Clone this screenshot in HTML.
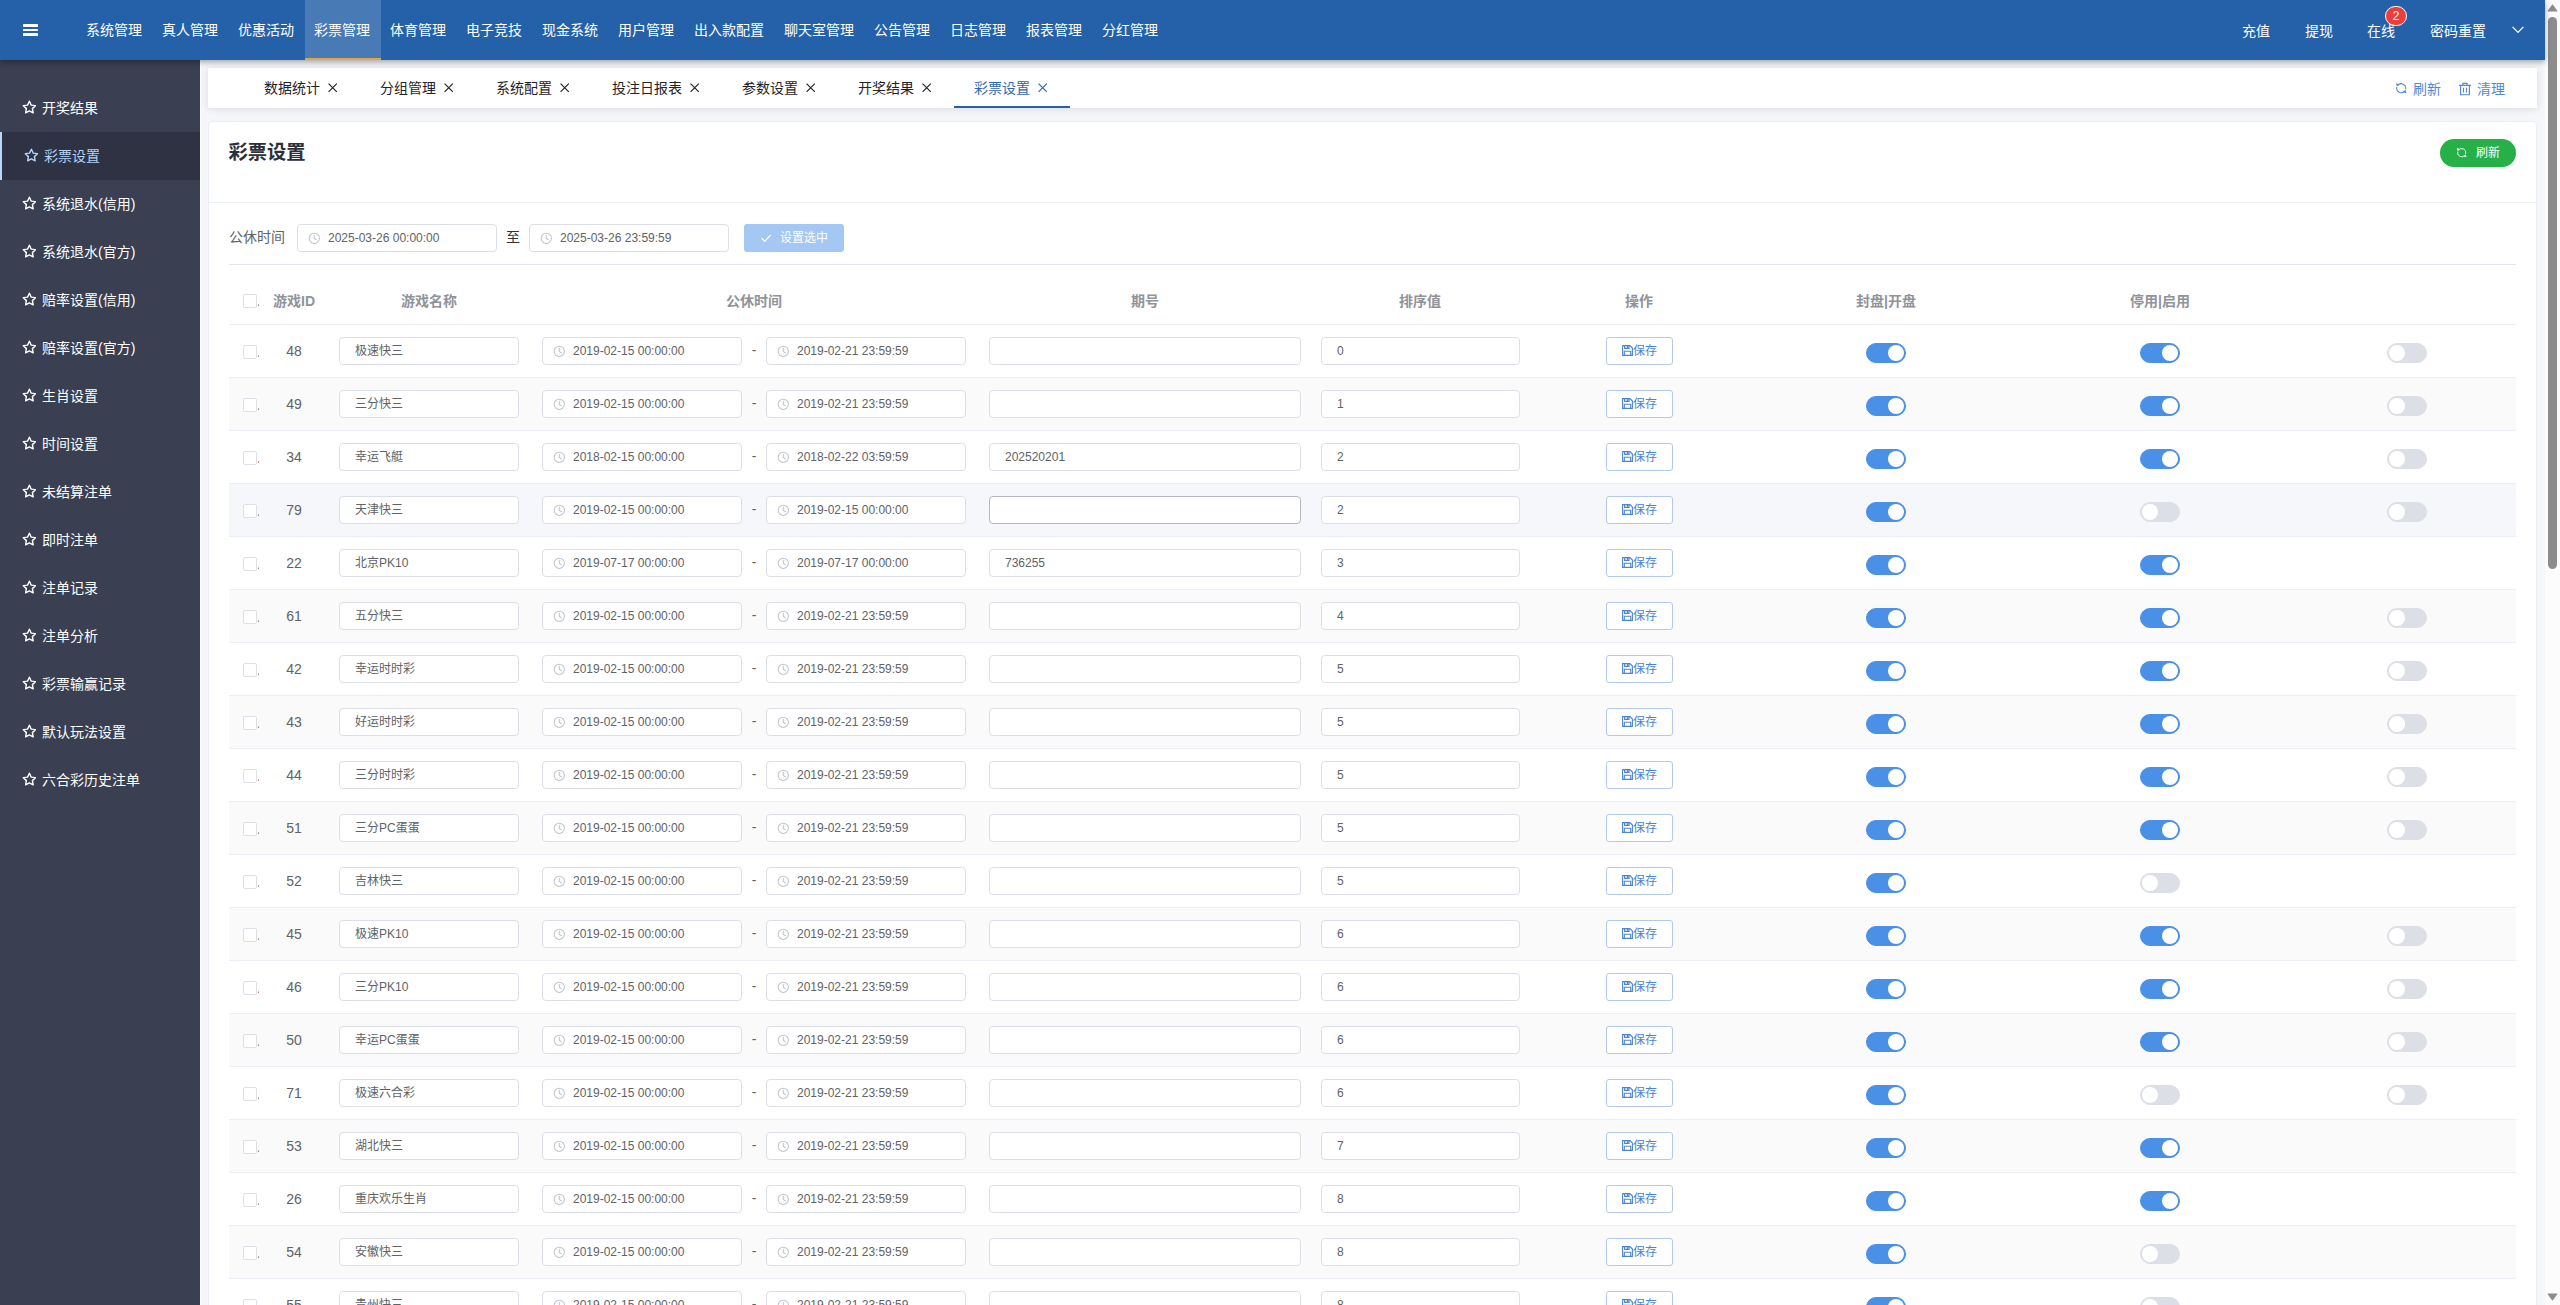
<!DOCTYPE html>
<html lang="zh-CN"><head><meta charset="utf-8"><title>彩票设置</title>
<style>
*{box-sizing:border-box;margin:0;padding:0}
html,body{width:2560px;height:1305px;overflow:hidden}
body{position:relative;background:#f5f6fa;font-family:"Liberation Sans","Noto Sans CJK SC",sans-serif;font-size:14px;color:#606266}
svg{display:block}
#hdr{position:absolute;left:0;top:0;width:2545px;height:60px;background:#2561a9;box-shadow:0 2px 6px rgba(0,0,0,.35);z-index:5;color:#fff}
#ham{position:absolute;left:23px;top:24px;width:15px;height:12px}
#ham i{position:absolute;left:0;width:15px;height:2.7px;background:#fff;border-radius:.5px}
#nav{position:absolute;left:76px;top:0;height:60px;display:flex}
#nav span{display:block;height:60px;line-height:60px;padding:0 10px;font-size:14px;white-space:nowrap}
#navon{position:absolute;left:305px;top:0;width:76px;height:60px;background:rgba(255,255,255,.16);border-bottom:2px solid #e0a644}
.hr{position:absolute;top:0;height:60px;line-height:62px;font-size:14px;white-space:nowrap}
#badge{position:absolute;left:2385px;top:6px;width:22px;height:20px;border-radius:10px;background:#ee3d3d;border:1px solid #fff;color:#fff;font-size:12px;line-height:18px;text-align:center}
#side{position:absolute;left:0;top:60px;width:200px;height:1245px;background:#3a3f51;padding-top:24px;color:#fff}
#side div{height:48px;line-height:48px;position:relative;padding-left:42px;font-size:14px;white-space:nowrap}
#side div.on{background:#2e3243;border-left:2px solid #b9d7fb;color:#b5d3f7}
#side .star{position:absolute;left:21.6px;top:16.4px;width:14.8px;height:14.2px}
#side div.on .star{left:22px}
#tabs{position:absolute;left:208px;top:68px;width:2329px;height:40px;background:#fff;box-shadow:0 1px 8px rgba(0,0,0,.11)}
#tabs .t{position:absolute;top:0;height:40px;line-height:40px;font-size:14px;color:#1f2329;white-space:nowrap}
#tabs .t.on{color:#2f66ad}
#tabs .cls{position:absolute;top:15.3px;width:9.4px;height:9.4px}
#tabs .bar{position:absolute;left:746px;top:38px;width:116px;height:2px;background:#2561a9}
#tabs .act{position:absolute;top:0;height:40px;line-height:42px;color:#5189d3;font-size:14px}
#card{position:absolute;left:208px;top:121px;width:2329px;height:1300px;background:#fff;border:1px solid #ebeef5;border-radius:4px}
#card h3{position:absolute;left:19.5px;top:18px;font-size:19.3px;line-height:26px;color:#2c3038;font-weight:bold}
#gbtn{position:absolute;left:2231px;top:17px;width:76px;height:28px;border-radius:14px;background:#25b148;color:#fff;font-size:12px;line-height:28px}
#hl{position:absolute;left:0;top:80px;width:2327px;height:1px;background:#ebeef5}
#flt{position:absolute;left:20px;top:102px;height:28px;line-height:28px;width:900px}
.inp{position:absolute;height:28px;border:1px solid #dcdfe6;border-radius:4px;background:#fff;font-size:12px;line-height:26px;color:#606266;white-space:nowrap;overflow:hidden}
.inp.d{padding-left:30px}
.inp.p{padding-left:15px}
.inp .clk{position:absolute;left:10.4px;top:7.4px;width:12.6px;height:12.6px}
#sbtn{position:absolute;left:515px;top:0;width:100px;height:28px;border-radius:3px;background:#a4c8f3;color:#fff;font-size:12px;line-height:28px}
#hl2{position:absolute;left:20px;top:142px;width:2287px;height:1px;background:#e4e7ed}
#tbl{position:absolute;left:20px;top:143px;width:2287px}
.th{position:absolute;top:0;height:60px;width:2287px;border-bottom:1px solid #ebeef5;font-weight:bold;color:#909399;font-size:14px;line-height:60px}
.th span{position:absolute;text-align:center;white-space:nowrap}
.r{position:absolute;left:0;width:2287px;height:53px;border-bottom:1px solid #ebeef5;background:#fff}
.r.s{background:#fafafa}
.r.h{background:#f5f7fa}
.cb{position:absolute;left:14px;width:14px;height:14px;border:1px solid #dcdfe6;border-radius:2px;background:#fff}
.dot{position:absolute;left:28px;font-size:14px;color:#606266;width:2.4px;overflow:hidden}
.id{position:absolute;left:30px;width:70px;top:0;height:52px;line-height:53px;text-align:center;font-size:14px;color:#606266}
.dash{position:absolute;left:513px;width:24px;top:0;height:52px;line-height:50px;text-align:center;font-size:14px;color:#606266}
.sbt{position:absolute;left:1377px;top:12px;width:67px;height:28px;border:1px solid #b4c9e8;border-radius:3px;background:#fff;color:#4a84d2;font-size:12px;line-height:26px}
.sbt .sv{position:absolute;left:15px;top:7px;width:11px;height:11px}
.sbt b{position:absolute;left:26px;top:0;font-weight:normal}
.sw{position:absolute;top:18px;width:40px;height:20px;border-radius:10px;background:#4a90e6;border:1px solid #4a90e6}
.sw i{position:absolute;top:1px;left:21px;width:16px;height:16px;border-radius:8px;background:#fff}
.sw.off{background:#dcdfe6;border-color:#dcdfe6}
.sw.off i{left:1px}
.rf{position:absolute;left:-1px;top:14.3px;width:12.4px;height:12.4px}
.tr{position:absolute;left:-1px;top:13.7px;width:14px;height:14px}
.rf2{position:absolute;left:16.3px;top:8.4px;width:11.4px;height:11.4px}
.ck{position:absolute;left:16px;top:8px;width:12px;height:12px}
#sb{position:absolute;left:2545px;top:0;width:15px;height:1305px;background:#fcfcfd}
#sb .th2{position:absolute;left:3px;top:17px;width:9px;height:552px;border-radius:4.5px;background:#8c8c8c}
#sb .up{position:absolute;left:2px;top:4px;width:11px;height:8px}
#sb .dn{position:absolute;left:2px;top:1293px;width:11px;height:8px}
</style></head><body>
<div id="hdr"><div id="ham"><i style="top:0"></i><i style="top:4.65px"></i><i style="top:9.3px"></i></div><div id="navon"></div><div id="nav"><span>系统管理</span><span>真人管理</span><span>优惠活动</span><span class="on">彩票管理</span><span>体育管理</span><span>电子竞技</span><span>现金系统</span><span>用户管理</span><span>出入款配置</span><span>聊天室管理</span><span>公告管理</span><span>日志管理</span><span>报表管理</span><span>分红管理</span></div><div class="hr" style="left:2242px">充值</div><div class="hr" style="left:2305px">提现</div><div class="hr" style="left:2367px">在线</div><div class="hr" style="left:2430px">密码重置</div><div id="badge">2</div><svg style="position:absolute;left:2512px;top:26px;width:12px;height:8px" viewBox="0 0 12 8"><path d="M0.6 0.9 L6 6.4 L11.4 0.9" fill="none" stroke="#fff" stroke-width="1.3"/></svg></div>
<div id="side"><div><svg class="star" viewBox="0 0 14 13.4"><path d="M7 1.15 L8.75 4.8 L12.75 5.35 L9.85 8.15 L10.55 12.15 L7 10.25 L3.45 12.15 L4.15 8.15 L1.25 5.35 L5.25 4.8 Z" fill="none" stroke="currentColor" stroke-width="1.35" stroke-linejoin="round"/></svg>开奖结果</div><div class="on"><svg class="star" viewBox="0 0 14 13.4"><path d="M7 1.15 L8.75 4.8 L12.75 5.35 L9.85 8.15 L10.55 12.15 L7 10.25 L3.45 12.15 L4.15 8.15 L1.25 5.35 L5.25 4.8 Z" fill="none" stroke="currentColor" stroke-width="1.35" stroke-linejoin="round"/></svg>彩票设置</div><div><svg class="star" viewBox="0 0 14 13.4"><path d="M7 1.15 L8.75 4.8 L12.75 5.35 L9.85 8.15 L10.55 12.15 L7 10.25 L3.45 12.15 L4.15 8.15 L1.25 5.35 L5.25 4.8 Z" fill="none" stroke="currentColor" stroke-width="1.35" stroke-linejoin="round"/></svg>系统退水(信用)</div><div><svg class="star" viewBox="0 0 14 13.4"><path d="M7 1.15 L8.75 4.8 L12.75 5.35 L9.85 8.15 L10.55 12.15 L7 10.25 L3.45 12.15 L4.15 8.15 L1.25 5.35 L5.25 4.8 Z" fill="none" stroke="currentColor" stroke-width="1.35" stroke-linejoin="round"/></svg>系统退水(官方)</div><div><svg class="star" viewBox="0 0 14 13.4"><path d="M7 1.15 L8.75 4.8 L12.75 5.35 L9.85 8.15 L10.55 12.15 L7 10.25 L3.45 12.15 L4.15 8.15 L1.25 5.35 L5.25 4.8 Z" fill="none" stroke="currentColor" stroke-width="1.35" stroke-linejoin="round"/></svg>赔率设置(信用)</div><div><svg class="star" viewBox="0 0 14 13.4"><path d="M7 1.15 L8.75 4.8 L12.75 5.35 L9.85 8.15 L10.55 12.15 L7 10.25 L3.45 12.15 L4.15 8.15 L1.25 5.35 L5.25 4.8 Z" fill="none" stroke="currentColor" stroke-width="1.35" stroke-linejoin="round"/></svg>赔率设置(官方)</div><div><svg class="star" viewBox="0 0 14 13.4"><path d="M7 1.15 L8.75 4.8 L12.75 5.35 L9.85 8.15 L10.55 12.15 L7 10.25 L3.45 12.15 L4.15 8.15 L1.25 5.35 L5.25 4.8 Z" fill="none" stroke="currentColor" stroke-width="1.35" stroke-linejoin="round"/></svg>生肖设置</div><div><svg class="star" viewBox="0 0 14 13.4"><path d="M7 1.15 L8.75 4.8 L12.75 5.35 L9.85 8.15 L10.55 12.15 L7 10.25 L3.45 12.15 L4.15 8.15 L1.25 5.35 L5.25 4.8 Z" fill="none" stroke="currentColor" stroke-width="1.35" stroke-linejoin="round"/></svg>时间设置</div><div><svg class="star" viewBox="0 0 14 13.4"><path d="M7 1.15 L8.75 4.8 L12.75 5.35 L9.85 8.15 L10.55 12.15 L7 10.25 L3.45 12.15 L4.15 8.15 L1.25 5.35 L5.25 4.8 Z" fill="none" stroke="currentColor" stroke-width="1.35" stroke-linejoin="round"/></svg>未结算注单</div><div><svg class="star" viewBox="0 0 14 13.4"><path d="M7 1.15 L8.75 4.8 L12.75 5.35 L9.85 8.15 L10.55 12.15 L7 10.25 L3.45 12.15 L4.15 8.15 L1.25 5.35 L5.25 4.8 Z" fill="none" stroke="currentColor" stroke-width="1.35" stroke-linejoin="round"/></svg>即时注单</div><div><svg class="star" viewBox="0 0 14 13.4"><path d="M7 1.15 L8.75 4.8 L12.75 5.35 L9.85 8.15 L10.55 12.15 L7 10.25 L3.45 12.15 L4.15 8.15 L1.25 5.35 L5.25 4.8 Z" fill="none" stroke="currentColor" stroke-width="1.35" stroke-linejoin="round"/></svg>注单记录</div><div><svg class="star" viewBox="0 0 14 13.4"><path d="M7 1.15 L8.75 4.8 L12.75 5.35 L9.85 8.15 L10.55 12.15 L7 10.25 L3.45 12.15 L4.15 8.15 L1.25 5.35 L5.25 4.8 Z" fill="none" stroke="currentColor" stroke-width="1.35" stroke-linejoin="round"/></svg>注单分析</div><div><svg class="star" viewBox="0 0 14 13.4"><path d="M7 1.15 L8.75 4.8 L12.75 5.35 L9.85 8.15 L10.55 12.15 L7 10.25 L3.45 12.15 L4.15 8.15 L1.25 5.35 L5.25 4.8 Z" fill="none" stroke="currentColor" stroke-width="1.35" stroke-linejoin="round"/></svg>彩票输赢记录</div><div><svg class="star" viewBox="0 0 14 13.4"><path d="M7 1.15 L8.75 4.8 L12.75 5.35 L9.85 8.15 L10.55 12.15 L7 10.25 L3.45 12.15 L4.15 8.15 L1.25 5.35 L5.25 4.8 Z" fill="none" stroke="currentColor" stroke-width="1.35" stroke-linejoin="round"/></svg>默认玩法设置</div><div><svg class="star" viewBox="0 0 14 13.4"><path d="M7 1.15 L8.75 4.8 L12.75 5.35 L9.85 8.15 L10.55 12.15 L7 10.25 L3.45 12.15 L4.15 8.15 L1.25 5.35 L5.25 4.8 Z" fill="none" stroke="currentColor" stroke-width="1.35" stroke-linejoin="round"/></svg>六合彩历史注单</div></div>
<div id="tabs"><span class="t" style="left:56px">数据统计</span><span style="color:#1f2329"><svg class="cls" style="left:120px" viewBox="0 0 10 10"><path d="M0.6 0.6 L9.4 9.4 M9.4 0.6 L0.6 9.4" stroke="currentColor" stroke-width="1.25" fill="none"/></svg></span><span class="t" style="left:172px">分组管理</span><span style="color:#1f2329"><svg class="cls" style="left:236px" viewBox="0 0 10 10"><path d="M0.6 0.6 L9.4 9.4 M9.4 0.6 L0.6 9.4" stroke="currentColor" stroke-width="1.25" fill="none"/></svg></span><span class="t" style="left:288px">系统配置</span><span style="color:#1f2329"><svg class="cls" style="left:352px" viewBox="0 0 10 10"><path d="M0.6 0.6 L9.4 9.4 M9.4 0.6 L0.6 9.4" stroke="currentColor" stroke-width="1.25" fill="none"/></svg></span><span class="t" style="left:404px">投注日报表</span><span style="color:#1f2329"><svg class="cls" style="left:482px" viewBox="0 0 10 10"><path d="M0.6 0.6 L9.4 9.4 M9.4 0.6 L0.6 9.4" stroke="currentColor" stroke-width="1.25" fill="none"/></svg></span><span class="t" style="left:534px">参数设置</span><span style="color:#1f2329"><svg class="cls" style="left:598px" viewBox="0 0 10 10"><path d="M0.6 0.6 L9.4 9.4 M9.4 0.6 L0.6 9.4" stroke="currentColor" stroke-width="1.25" fill="none"/></svg></span><span class="t" style="left:650px">开奖结果</span><span style="color:#1f2329"><svg class="cls" style="left:714px" viewBox="0 0 10 10"><path d="M0.6 0.6 L9.4 9.4 M9.4 0.6 L0.6 9.4" stroke="currentColor" stroke-width="1.25" fill="none"/></svg></span><span class="t on" style="left:766px">彩票设置</span><span style="color:#2f66ad"><svg class="cls" style="left:830px" viewBox="0 0 10 10"><path d="M0.6 0.6 L9.4 9.4 M9.4 0.6 L0.6 9.4" stroke="currentColor" stroke-width="1.25" fill="none"/></svg></span><div class="bar"></div><div class="act" style="left:2188px"><svg class="rf" viewBox="0 0 12 12"><path d="M2.6 3.4 A4.3 4.3 0 0 1 10.2 7.1 M9.4 8.6 A4.3 4.3 0 0 1 1.8 4.9" fill="none" stroke="currentColor" stroke-width="1"/><path d="M0.9 1.1 L4.1 2.1 L1.9 4.4 Z M11.1 10.9 L7.9 9.9 L10.1 7.6 Z" fill="currentColor"/></svg><span style="position:absolute;left:17px;top:0;white-space:nowrap">刷新</span></div><div class="act" style="left:2251px"><svg class="tr" viewBox="0 0 12 12"><path d="M0.8 2.9 H11.2 M4.2 2.7 V1.2 H7.8 V2.7 M2.2 3 V10.9 H9.8 V3 M4.7 5 V9 M7.3 5 V9" fill="none" stroke="currentColor" stroke-width="1"/></svg><span style="position:absolute;left:18px;top:0;white-space:nowrap">清理</span></div></div>
<div id="card"><h3>彩票设置</h3><div id="gbtn"><svg class="rf2" viewBox="0 0 12 12"><path d="M2.6 3.4 A4.3 4.3 0 0 1 10.2 7.1 M9.4 8.6 A4.3 4.3 0 0 1 1.8 4.9" fill="none" stroke="currentColor" stroke-width="1"/><path d="M0.9 1.1 L4.1 2.1 L1.9 4.4 Z M11.1 10.9 L7.9 9.9 L10.1 7.6 Z" fill="currentColor"/></svg><span style="position:absolute;left:36px;top:0;white-space:nowrap">刷新</span></div><div id="hl"></div><div id="flt"><span style="position:absolute;left:0;top:-1px;color:#606266">公休时间</span><div class="inp d" style="left:68px;top:0;width:200px"><svg class="clk" viewBox="0 0 12 12"><circle cx="6" cy="6" r="4.9" fill="none" stroke="#c0c4cc" stroke-width="1"/><path d="M6 3.1 V6.2 L8 7.4" fill="none" stroke="#c0c4cc" stroke-width="1" stroke-linecap="round"/></svg>2025-03-26 00:00:00</div><span style="position:absolute;left:277px;top:-1px;color:#303133">至</span><div class="inp d" style="left:300px;top:0;width:200px"><svg class="clk" viewBox="0 0 12 12"><circle cx="6" cy="6" r="4.9" fill="none" stroke="#c0c4cc" stroke-width="1"/><path d="M6 3.1 V6.2 L8 7.4" fill="none" stroke="#c0c4cc" stroke-width="1" stroke-linecap="round"/></svg>2025-03-26 23:59:59</div><div id="sbtn"><svg class="ck" viewBox="0 0 12 12"><path d="M1.6 6.3 L4.7 9.3 L10.6 3" fill="none" stroke="#fff" stroke-width="1.2"/></svg><span style="position:absolute;left:36px;top:0;white-space:nowrap">设置选中</span></div></div><div id="hl2"></div><div id="tbl"><div class="th"><div class="cb" style="top:29px"></div><span class="dot" style="top:6px;font-weight:normal">.</span><span style="left:-35px;width:200px;top:6px">游戏ID</span><span style="left:100px;width:200px;top:6px">游戏名称</span><span style="left:425px;width:200px;top:6px">公休时间</span><span style="left:816px;width:200px;top:6px">期号</span><span style="left:1091px;width:200px;top:6px">排序值</span><span style="left:1310px;width:200px;top:6px">操作</span><span style="left:1557px;width:200px;top:6px">封盘|开盘</span><span style="left:1831px;width:200px;top:6px">停用|启用</span></div>
<div class="r" style="top:60px"><div class="cb" style="top:20px"></div><span class="dot" style="top:19px">.</span><div class="id">48</div><div class="inp p" style="left:110px;top:12px;width:180px">极速快三</div><div class="inp d" style="left:313px;top:12px;width:200px"><svg class="clk" viewBox="0 0 12 12"><circle cx="6" cy="6" r="4.9" fill="none" stroke="#c0c4cc" stroke-width="1"/><path d="M6 3.1 V6.2 L8 7.4" fill="none" stroke="#c0c4cc" stroke-width="1" stroke-linecap="round"/></svg>2019-02-15 00:00:00</div><div class="dash">-</div><div class="inp d" style="left:537px;top:12px;width:200px"><svg class="clk" viewBox="0 0 12 12"><circle cx="6" cy="6" r="4.9" fill="none" stroke="#c0c4cc" stroke-width="1"/><path d="M6 3.1 V6.2 L8 7.4" fill="none" stroke="#c0c4cc" stroke-width="1" stroke-linecap="round"/></svg>2019-02-21 23:59:59</div><div class="inp p" style="left:760px;top:12px;width:312px"></div><div class="inp p" style="left:1092px;top:12px;width:199px">0</div><div class="sbt"><svg class="sv" viewBox="0 0 11 11"><path d="M0.6 0.6 H8 L10.4 3 V10.4 H0.6 Z M2.3 10.4 V6.3 H8.7 V10.4 M2.6 0.6 V3.4 H7 V0.6" fill="none" stroke="currentColor" stroke-width="1.1"/><rect x="4.9" y="0.9" width="1.3" height="2" fill="currentColor"/></svg><b>保存</b></div><div class="sw" style="left:1637px"><i></i></div><div class="sw" style="left:1911px"><i></i></div><div class="sw off" style="left:2158px"><i></i></div></div>
<div class="r s" style="top:113px"><div class="cb" style="top:20px"></div><span class="dot" style="top:19px">.</span><div class="id">49</div><div class="inp p" style="left:110px;top:12px;width:180px">三分快三</div><div class="inp d" style="left:313px;top:12px;width:200px"><svg class="clk" viewBox="0 0 12 12"><circle cx="6" cy="6" r="4.9" fill="none" stroke="#c0c4cc" stroke-width="1"/><path d="M6 3.1 V6.2 L8 7.4" fill="none" stroke="#c0c4cc" stroke-width="1" stroke-linecap="round"/></svg>2019-02-15 00:00:00</div><div class="dash">-</div><div class="inp d" style="left:537px;top:12px;width:200px"><svg class="clk" viewBox="0 0 12 12"><circle cx="6" cy="6" r="4.9" fill="none" stroke="#c0c4cc" stroke-width="1"/><path d="M6 3.1 V6.2 L8 7.4" fill="none" stroke="#c0c4cc" stroke-width="1" stroke-linecap="round"/></svg>2019-02-21 23:59:59</div><div class="inp p" style="left:760px;top:12px;width:312px"></div><div class="inp p" style="left:1092px;top:12px;width:199px">1</div><div class="sbt"><svg class="sv" viewBox="0 0 11 11"><path d="M0.6 0.6 H8 L10.4 3 V10.4 H0.6 Z M2.3 10.4 V6.3 H8.7 V10.4 M2.6 0.6 V3.4 H7 V0.6" fill="none" stroke="currentColor" stroke-width="1.1"/><rect x="4.9" y="0.9" width="1.3" height="2" fill="currentColor"/></svg><b>保存</b></div><div class="sw" style="left:1637px"><i></i></div><div class="sw" style="left:1911px"><i></i></div><div class="sw off" style="left:2158px"><i></i></div></div>
<div class="r" style="top:166px"><div class="cb" style="top:20px"></div><span class="dot" style="top:19px">.</span><div class="id">34</div><div class="inp p" style="left:110px;top:12px;width:180px">幸运飞艇</div><div class="inp d" style="left:313px;top:12px;width:200px"><svg class="clk" viewBox="0 0 12 12"><circle cx="6" cy="6" r="4.9" fill="none" stroke="#c0c4cc" stroke-width="1"/><path d="M6 3.1 V6.2 L8 7.4" fill="none" stroke="#c0c4cc" stroke-width="1" stroke-linecap="round"/></svg>2018-02-15 00:00:00</div><div class="dash">-</div><div class="inp d" style="left:537px;top:12px;width:200px"><svg class="clk" viewBox="0 0 12 12"><circle cx="6" cy="6" r="4.9" fill="none" stroke="#c0c4cc" stroke-width="1"/><path d="M6 3.1 V6.2 L8 7.4" fill="none" stroke="#c0c4cc" stroke-width="1" stroke-linecap="round"/></svg>2018-02-22 03:59:59</div><div class="inp p" style="left:760px;top:12px;width:312px">202520201</div><div class="inp p" style="left:1092px;top:12px;width:199px">2</div><div class="sbt"><svg class="sv" viewBox="0 0 11 11"><path d="M0.6 0.6 H8 L10.4 3 V10.4 H0.6 Z M2.3 10.4 V6.3 H8.7 V10.4 M2.6 0.6 V3.4 H7 V0.6" fill="none" stroke="currentColor" stroke-width="1.1"/><rect x="4.9" y="0.9" width="1.3" height="2" fill="currentColor"/></svg><b>保存</b></div><div class="sw" style="left:1637px"><i></i></div><div class="sw" style="left:1911px"><i></i></div><div class="sw off" style="left:2158px"><i></i></div></div>
<div class="r h" style="top:219px"><div class="cb" style="top:20px"></div><span class="dot" style="top:19px">.</span><div class="id">79</div><div class="inp p" style="left:110px;top:12px;width:180px">天津快三</div><div class="inp d" style="left:313px;top:12px;width:200px"><svg class="clk" viewBox="0 0 12 12"><circle cx="6" cy="6" r="4.9" fill="none" stroke="#c0c4cc" stroke-width="1"/><path d="M6 3.1 V6.2 L8 7.4" fill="none" stroke="#c0c4cc" stroke-width="1" stroke-linecap="round"/></svg>2019-02-15 00:00:00</div><div class="dash">-</div><div class="inp d" style="left:537px;top:12px;width:200px"><svg class="clk" viewBox="0 0 12 12"><circle cx="6" cy="6" r="4.9" fill="none" stroke="#c0c4cc" stroke-width="1"/><path d="M6 3.1 V6.2 L8 7.4" fill="none" stroke="#c0c4cc" stroke-width="1" stroke-linecap="round"/></svg>2019-02-15 00:00:00</div><div class="inp p" style="left:760px;top:12px;width:312px;border-color:#b4b8c0"></div><div class="inp p" style="left:1092px;top:12px;width:199px">2</div><div class="sbt"><svg class="sv" viewBox="0 0 11 11"><path d="M0.6 0.6 H8 L10.4 3 V10.4 H0.6 Z M2.3 10.4 V6.3 H8.7 V10.4 M2.6 0.6 V3.4 H7 V0.6" fill="none" stroke="currentColor" stroke-width="1.1"/><rect x="4.9" y="0.9" width="1.3" height="2" fill="currentColor"/></svg><b>保存</b></div><div class="sw" style="left:1637px"><i></i></div><div class="sw off" style="left:1911px"><i></i></div><div class="sw off" style="left:2158px"><i></i></div></div>
<div class="r" style="top:272px"><div class="cb" style="top:20px"></div><span class="dot" style="top:19px">.</span><div class="id">22</div><div class="inp p" style="left:110px;top:12px;width:180px">北京PK10</div><div class="inp d" style="left:313px;top:12px;width:200px"><svg class="clk" viewBox="0 0 12 12"><circle cx="6" cy="6" r="4.9" fill="none" stroke="#c0c4cc" stroke-width="1"/><path d="M6 3.1 V6.2 L8 7.4" fill="none" stroke="#c0c4cc" stroke-width="1" stroke-linecap="round"/></svg>2019-07-17 00:00:00</div><div class="dash">-</div><div class="inp d" style="left:537px;top:12px;width:200px"><svg class="clk" viewBox="0 0 12 12"><circle cx="6" cy="6" r="4.9" fill="none" stroke="#c0c4cc" stroke-width="1"/><path d="M6 3.1 V6.2 L8 7.4" fill="none" stroke="#c0c4cc" stroke-width="1" stroke-linecap="round"/></svg>2019-07-17 00:00:00</div><div class="inp p" style="left:760px;top:12px;width:312px">736255</div><div class="inp p" style="left:1092px;top:12px;width:199px">3</div><div class="sbt"><svg class="sv" viewBox="0 0 11 11"><path d="M0.6 0.6 H8 L10.4 3 V10.4 H0.6 Z M2.3 10.4 V6.3 H8.7 V10.4 M2.6 0.6 V3.4 H7 V0.6" fill="none" stroke="currentColor" stroke-width="1.1"/><rect x="4.9" y="0.9" width="1.3" height="2" fill="currentColor"/></svg><b>保存</b></div><div class="sw" style="left:1637px"><i></i></div><div class="sw" style="left:1911px"><i></i></div></div>
<div class="r s" style="top:325px"><div class="cb" style="top:20px"></div><span class="dot" style="top:19px">.</span><div class="id">61</div><div class="inp p" style="left:110px;top:12px;width:180px">五分快三</div><div class="inp d" style="left:313px;top:12px;width:200px"><svg class="clk" viewBox="0 0 12 12"><circle cx="6" cy="6" r="4.9" fill="none" stroke="#c0c4cc" stroke-width="1"/><path d="M6 3.1 V6.2 L8 7.4" fill="none" stroke="#c0c4cc" stroke-width="1" stroke-linecap="round"/></svg>2019-02-15 00:00:00</div><div class="dash">-</div><div class="inp d" style="left:537px;top:12px;width:200px"><svg class="clk" viewBox="0 0 12 12"><circle cx="6" cy="6" r="4.9" fill="none" stroke="#c0c4cc" stroke-width="1"/><path d="M6 3.1 V6.2 L8 7.4" fill="none" stroke="#c0c4cc" stroke-width="1" stroke-linecap="round"/></svg>2019-02-21 23:59:59</div><div class="inp p" style="left:760px;top:12px;width:312px"></div><div class="inp p" style="left:1092px;top:12px;width:199px">4</div><div class="sbt"><svg class="sv" viewBox="0 0 11 11"><path d="M0.6 0.6 H8 L10.4 3 V10.4 H0.6 Z M2.3 10.4 V6.3 H8.7 V10.4 M2.6 0.6 V3.4 H7 V0.6" fill="none" stroke="currentColor" stroke-width="1.1"/><rect x="4.9" y="0.9" width="1.3" height="2" fill="currentColor"/></svg><b>保存</b></div><div class="sw" style="left:1637px"><i></i></div><div class="sw" style="left:1911px"><i></i></div><div class="sw off" style="left:2158px"><i></i></div></div>
<div class="r" style="top:378px"><div class="cb" style="top:20px"></div><span class="dot" style="top:19px">.</span><div class="id">42</div><div class="inp p" style="left:110px;top:12px;width:180px">幸运时时彩</div><div class="inp d" style="left:313px;top:12px;width:200px"><svg class="clk" viewBox="0 0 12 12"><circle cx="6" cy="6" r="4.9" fill="none" stroke="#c0c4cc" stroke-width="1"/><path d="M6 3.1 V6.2 L8 7.4" fill="none" stroke="#c0c4cc" stroke-width="1" stroke-linecap="round"/></svg>2019-02-15 00:00:00</div><div class="dash">-</div><div class="inp d" style="left:537px;top:12px;width:200px"><svg class="clk" viewBox="0 0 12 12"><circle cx="6" cy="6" r="4.9" fill="none" stroke="#c0c4cc" stroke-width="1"/><path d="M6 3.1 V6.2 L8 7.4" fill="none" stroke="#c0c4cc" stroke-width="1" stroke-linecap="round"/></svg>2019-02-21 23:59:59</div><div class="inp p" style="left:760px;top:12px;width:312px"></div><div class="inp p" style="left:1092px;top:12px;width:199px">5</div><div class="sbt"><svg class="sv" viewBox="0 0 11 11"><path d="M0.6 0.6 H8 L10.4 3 V10.4 H0.6 Z M2.3 10.4 V6.3 H8.7 V10.4 M2.6 0.6 V3.4 H7 V0.6" fill="none" stroke="currentColor" stroke-width="1.1"/><rect x="4.9" y="0.9" width="1.3" height="2" fill="currentColor"/></svg><b>保存</b></div><div class="sw" style="left:1637px"><i></i></div><div class="sw" style="left:1911px"><i></i></div><div class="sw off" style="left:2158px"><i></i></div></div>
<div class="r s" style="top:431px"><div class="cb" style="top:20px"></div><span class="dot" style="top:19px">.</span><div class="id">43</div><div class="inp p" style="left:110px;top:12px;width:180px">好运时时彩</div><div class="inp d" style="left:313px;top:12px;width:200px"><svg class="clk" viewBox="0 0 12 12"><circle cx="6" cy="6" r="4.9" fill="none" stroke="#c0c4cc" stroke-width="1"/><path d="M6 3.1 V6.2 L8 7.4" fill="none" stroke="#c0c4cc" stroke-width="1" stroke-linecap="round"/></svg>2019-02-15 00:00:00</div><div class="dash">-</div><div class="inp d" style="left:537px;top:12px;width:200px"><svg class="clk" viewBox="0 0 12 12"><circle cx="6" cy="6" r="4.9" fill="none" stroke="#c0c4cc" stroke-width="1"/><path d="M6 3.1 V6.2 L8 7.4" fill="none" stroke="#c0c4cc" stroke-width="1" stroke-linecap="round"/></svg>2019-02-21 23:59:59</div><div class="inp p" style="left:760px;top:12px;width:312px"></div><div class="inp p" style="left:1092px;top:12px;width:199px">5</div><div class="sbt"><svg class="sv" viewBox="0 0 11 11"><path d="M0.6 0.6 H8 L10.4 3 V10.4 H0.6 Z M2.3 10.4 V6.3 H8.7 V10.4 M2.6 0.6 V3.4 H7 V0.6" fill="none" stroke="currentColor" stroke-width="1.1"/><rect x="4.9" y="0.9" width="1.3" height="2" fill="currentColor"/></svg><b>保存</b></div><div class="sw" style="left:1637px"><i></i></div><div class="sw" style="left:1911px"><i></i></div><div class="sw off" style="left:2158px"><i></i></div></div>
<div class="r" style="top:484px"><div class="cb" style="top:20px"></div><span class="dot" style="top:19px">.</span><div class="id">44</div><div class="inp p" style="left:110px;top:12px;width:180px">三分时时彩</div><div class="inp d" style="left:313px;top:12px;width:200px"><svg class="clk" viewBox="0 0 12 12"><circle cx="6" cy="6" r="4.9" fill="none" stroke="#c0c4cc" stroke-width="1"/><path d="M6 3.1 V6.2 L8 7.4" fill="none" stroke="#c0c4cc" stroke-width="1" stroke-linecap="round"/></svg>2019-02-15 00:00:00</div><div class="dash">-</div><div class="inp d" style="left:537px;top:12px;width:200px"><svg class="clk" viewBox="0 0 12 12"><circle cx="6" cy="6" r="4.9" fill="none" stroke="#c0c4cc" stroke-width="1"/><path d="M6 3.1 V6.2 L8 7.4" fill="none" stroke="#c0c4cc" stroke-width="1" stroke-linecap="round"/></svg>2019-02-21 23:59:59</div><div class="inp p" style="left:760px;top:12px;width:312px"></div><div class="inp p" style="left:1092px;top:12px;width:199px">5</div><div class="sbt"><svg class="sv" viewBox="0 0 11 11"><path d="M0.6 0.6 H8 L10.4 3 V10.4 H0.6 Z M2.3 10.4 V6.3 H8.7 V10.4 M2.6 0.6 V3.4 H7 V0.6" fill="none" stroke="currentColor" stroke-width="1.1"/><rect x="4.9" y="0.9" width="1.3" height="2" fill="currentColor"/></svg><b>保存</b></div><div class="sw" style="left:1637px"><i></i></div><div class="sw" style="left:1911px"><i></i></div><div class="sw off" style="left:2158px"><i></i></div></div>
<div class="r s" style="top:537px"><div class="cb" style="top:20px"></div><span class="dot" style="top:19px">.</span><div class="id">51</div><div class="inp p" style="left:110px;top:12px;width:180px">三分PC蛋蛋</div><div class="inp d" style="left:313px;top:12px;width:200px"><svg class="clk" viewBox="0 0 12 12"><circle cx="6" cy="6" r="4.9" fill="none" stroke="#c0c4cc" stroke-width="1"/><path d="M6 3.1 V6.2 L8 7.4" fill="none" stroke="#c0c4cc" stroke-width="1" stroke-linecap="round"/></svg>2019-02-15 00:00:00</div><div class="dash">-</div><div class="inp d" style="left:537px;top:12px;width:200px"><svg class="clk" viewBox="0 0 12 12"><circle cx="6" cy="6" r="4.9" fill="none" stroke="#c0c4cc" stroke-width="1"/><path d="M6 3.1 V6.2 L8 7.4" fill="none" stroke="#c0c4cc" stroke-width="1" stroke-linecap="round"/></svg>2019-02-21 23:59:59</div><div class="inp p" style="left:760px;top:12px;width:312px"></div><div class="inp p" style="left:1092px;top:12px;width:199px">5</div><div class="sbt"><svg class="sv" viewBox="0 0 11 11"><path d="M0.6 0.6 H8 L10.4 3 V10.4 H0.6 Z M2.3 10.4 V6.3 H8.7 V10.4 M2.6 0.6 V3.4 H7 V0.6" fill="none" stroke="currentColor" stroke-width="1.1"/><rect x="4.9" y="0.9" width="1.3" height="2" fill="currentColor"/></svg><b>保存</b></div><div class="sw" style="left:1637px"><i></i></div><div class="sw" style="left:1911px"><i></i></div><div class="sw off" style="left:2158px"><i></i></div></div>
<div class="r" style="top:590px"><div class="cb" style="top:20px"></div><span class="dot" style="top:19px">.</span><div class="id">52</div><div class="inp p" style="left:110px;top:12px;width:180px">吉林快三</div><div class="inp d" style="left:313px;top:12px;width:200px"><svg class="clk" viewBox="0 0 12 12"><circle cx="6" cy="6" r="4.9" fill="none" stroke="#c0c4cc" stroke-width="1"/><path d="M6 3.1 V6.2 L8 7.4" fill="none" stroke="#c0c4cc" stroke-width="1" stroke-linecap="round"/></svg>2019-02-15 00:00:00</div><div class="dash">-</div><div class="inp d" style="left:537px;top:12px;width:200px"><svg class="clk" viewBox="0 0 12 12"><circle cx="6" cy="6" r="4.9" fill="none" stroke="#c0c4cc" stroke-width="1"/><path d="M6 3.1 V6.2 L8 7.4" fill="none" stroke="#c0c4cc" stroke-width="1" stroke-linecap="round"/></svg>2019-02-21 23:59:59</div><div class="inp p" style="left:760px;top:12px;width:312px"></div><div class="inp p" style="left:1092px;top:12px;width:199px">5</div><div class="sbt"><svg class="sv" viewBox="0 0 11 11"><path d="M0.6 0.6 H8 L10.4 3 V10.4 H0.6 Z M2.3 10.4 V6.3 H8.7 V10.4 M2.6 0.6 V3.4 H7 V0.6" fill="none" stroke="currentColor" stroke-width="1.1"/><rect x="4.9" y="0.9" width="1.3" height="2" fill="currentColor"/></svg><b>保存</b></div><div class="sw" style="left:1637px"><i></i></div><div class="sw off" style="left:1911px"><i></i></div></div>
<div class="r s" style="top:643px"><div class="cb" style="top:20px"></div><span class="dot" style="top:19px">.</span><div class="id">45</div><div class="inp p" style="left:110px;top:12px;width:180px">极速PK10</div><div class="inp d" style="left:313px;top:12px;width:200px"><svg class="clk" viewBox="0 0 12 12"><circle cx="6" cy="6" r="4.9" fill="none" stroke="#c0c4cc" stroke-width="1"/><path d="M6 3.1 V6.2 L8 7.4" fill="none" stroke="#c0c4cc" stroke-width="1" stroke-linecap="round"/></svg>2019-02-15 00:00:00</div><div class="dash">-</div><div class="inp d" style="left:537px;top:12px;width:200px"><svg class="clk" viewBox="0 0 12 12"><circle cx="6" cy="6" r="4.9" fill="none" stroke="#c0c4cc" stroke-width="1"/><path d="M6 3.1 V6.2 L8 7.4" fill="none" stroke="#c0c4cc" stroke-width="1" stroke-linecap="round"/></svg>2019-02-21 23:59:59</div><div class="inp p" style="left:760px;top:12px;width:312px"></div><div class="inp p" style="left:1092px;top:12px;width:199px">6</div><div class="sbt"><svg class="sv" viewBox="0 0 11 11"><path d="M0.6 0.6 H8 L10.4 3 V10.4 H0.6 Z M2.3 10.4 V6.3 H8.7 V10.4 M2.6 0.6 V3.4 H7 V0.6" fill="none" stroke="currentColor" stroke-width="1.1"/><rect x="4.9" y="0.9" width="1.3" height="2" fill="currentColor"/></svg><b>保存</b></div><div class="sw" style="left:1637px"><i></i></div><div class="sw" style="left:1911px"><i></i></div><div class="sw off" style="left:2158px"><i></i></div></div>
<div class="r" style="top:696px"><div class="cb" style="top:20px"></div><span class="dot" style="top:19px">.</span><div class="id">46</div><div class="inp p" style="left:110px;top:12px;width:180px">三分PK10</div><div class="inp d" style="left:313px;top:12px;width:200px"><svg class="clk" viewBox="0 0 12 12"><circle cx="6" cy="6" r="4.9" fill="none" stroke="#c0c4cc" stroke-width="1"/><path d="M6 3.1 V6.2 L8 7.4" fill="none" stroke="#c0c4cc" stroke-width="1" stroke-linecap="round"/></svg>2019-02-15 00:00:00</div><div class="dash">-</div><div class="inp d" style="left:537px;top:12px;width:200px"><svg class="clk" viewBox="0 0 12 12"><circle cx="6" cy="6" r="4.9" fill="none" stroke="#c0c4cc" stroke-width="1"/><path d="M6 3.1 V6.2 L8 7.4" fill="none" stroke="#c0c4cc" stroke-width="1" stroke-linecap="round"/></svg>2019-02-21 23:59:59</div><div class="inp p" style="left:760px;top:12px;width:312px"></div><div class="inp p" style="left:1092px;top:12px;width:199px">6</div><div class="sbt"><svg class="sv" viewBox="0 0 11 11"><path d="M0.6 0.6 H8 L10.4 3 V10.4 H0.6 Z M2.3 10.4 V6.3 H8.7 V10.4 M2.6 0.6 V3.4 H7 V0.6" fill="none" stroke="currentColor" stroke-width="1.1"/><rect x="4.9" y="0.9" width="1.3" height="2" fill="currentColor"/></svg><b>保存</b></div><div class="sw" style="left:1637px"><i></i></div><div class="sw" style="left:1911px"><i></i></div><div class="sw off" style="left:2158px"><i></i></div></div>
<div class="r s" style="top:749px"><div class="cb" style="top:20px"></div><span class="dot" style="top:19px">.</span><div class="id">50</div><div class="inp p" style="left:110px;top:12px;width:180px">幸运PC蛋蛋</div><div class="inp d" style="left:313px;top:12px;width:200px"><svg class="clk" viewBox="0 0 12 12"><circle cx="6" cy="6" r="4.9" fill="none" stroke="#c0c4cc" stroke-width="1"/><path d="M6 3.1 V6.2 L8 7.4" fill="none" stroke="#c0c4cc" stroke-width="1" stroke-linecap="round"/></svg>2019-02-15 00:00:00</div><div class="dash">-</div><div class="inp d" style="left:537px;top:12px;width:200px"><svg class="clk" viewBox="0 0 12 12"><circle cx="6" cy="6" r="4.9" fill="none" stroke="#c0c4cc" stroke-width="1"/><path d="M6 3.1 V6.2 L8 7.4" fill="none" stroke="#c0c4cc" stroke-width="1" stroke-linecap="round"/></svg>2019-02-21 23:59:59</div><div class="inp p" style="left:760px;top:12px;width:312px"></div><div class="inp p" style="left:1092px;top:12px;width:199px">6</div><div class="sbt"><svg class="sv" viewBox="0 0 11 11"><path d="M0.6 0.6 H8 L10.4 3 V10.4 H0.6 Z M2.3 10.4 V6.3 H8.7 V10.4 M2.6 0.6 V3.4 H7 V0.6" fill="none" stroke="currentColor" stroke-width="1.1"/><rect x="4.9" y="0.9" width="1.3" height="2" fill="currentColor"/></svg><b>保存</b></div><div class="sw" style="left:1637px"><i></i></div><div class="sw" style="left:1911px"><i></i></div><div class="sw off" style="left:2158px"><i></i></div></div>
<div class="r" style="top:802px"><div class="cb" style="top:20px"></div><span class="dot" style="top:19px">.</span><div class="id">71</div><div class="inp p" style="left:110px;top:12px;width:180px">极速六合彩</div><div class="inp d" style="left:313px;top:12px;width:200px"><svg class="clk" viewBox="0 0 12 12"><circle cx="6" cy="6" r="4.9" fill="none" stroke="#c0c4cc" stroke-width="1"/><path d="M6 3.1 V6.2 L8 7.4" fill="none" stroke="#c0c4cc" stroke-width="1" stroke-linecap="round"/></svg>2019-02-15 00:00:00</div><div class="dash">-</div><div class="inp d" style="left:537px;top:12px;width:200px"><svg class="clk" viewBox="0 0 12 12"><circle cx="6" cy="6" r="4.9" fill="none" stroke="#c0c4cc" stroke-width="1"/><path d="M6 3.1 V6.2 L8 7.4" fill="none" stroke="#c0c4cc" stroke-width="1" stroke-linecap="round"/></svg>2019-02-21 23:59:59</div><div class="inp p" style="left:760px;top:12px;width:312px"></div><div class="inp p" style="left:1092px;top:12px;width:199px">6</div><div class="sbt"><svg class="sv" viewBox="0 0 11 11"><path d="M0.6 0.6 H8 L10.4 3 V10.4 H0.6 Z M2.3 10.4 V6.3 H8.7 V10.4 M2.6 0.6 V3.4 H7 V0.6" fill="none" stroke="currentColor" stroke-width="1.1"/><rect x="4.9" y="0.9" width="1.3" height="2" fill="currentColor"/></svg><b>保存</b></div><div class="sw" style="left:1637px"><i></i></div><div class="sw off" style="left:1911px"><i></i></div><div class="sw off" style="left:2158px"><i></i></div></div>
<div class="r s" style="top:855px"><div class="cb" style="top:20px"></div><span class="dot" style="top:19px">.</span><div class="id">53</div><div class="inp p" style="left:110px;top:12px;width:180px">湖北快三</div><div class="inp d" style="left:313px;top:12px;width:200px"><svg class="clk" viewBox="0 0 12 12"><circle cx="6" cy="6" r="4.9" fill="none" stroke="#c0c4cc" stroke-width="1"/><path d="M6 3.1 V6.2 L8 7.4" fill="none" stroke="#c0c4cc" stroke-width="1" stroke-linecap="round"/></svg>2019-02-15 00:00:00</div><div class="dash">-</div><div class="inp d" style="left:537px;top:12px;width:200px"><svg class="clk" viewBox="0 0 12 12"><circle cx="6" cy="6" r="4.9" fill="none" stroke="#c0c4cc" stroke-width="1"/><path d="M6 3.1 V6.2 L8 7.4" fill="none" stroke="#c0c4cc" stroke-width="1" stroke-linecap="round"/></svg>2019-02-21 23:59:59</div><div class="inp p" style="left:760px;top:12px;width:312px"></div><div class="inp p" style="left:1092px;top:12px;width:199px">7</div><div class="sbt"><svg class="sv" viewBox="0 0 11 11"><path d="M0.6 0.6 H8 L10.4 3 V10.4 H0.6 Z M2.3 10.4 V6.3 H8.7 V10.4 M2.6 0.6 V3.4 H7 V0.6" fill="none" stroke="currentColor" stroke-width="1.1"/><rect x="4.9" y="0.9" width="1.3" height="2" fill="currentColor"/></svg><b>保存</b></div><div class="sw" style="left:1637px"><i></i></div><div class="sw" style="left:1911px"><i></i></div></div>
<div class="r" style="top:908px"><div class="cb" style="top:20px"></div><span class="dot" style="top:19px">.</span><div class="id">26</div><div class="inp p" style="left:110px;top:12px;width:180px">重庆欢乐生肖</div><div class="inp d" style="left:313px;top:12px;width:200px"><svg class="clk" viewBox="0 0 12 12"><circle cx="6" cy="6" r="4.9" fill="none" stroke="#c0c4cc" stroke-width="1"/><path d="M6 3.1 V6.2 L8 7.4" fill="none" stroke="#c0c4cc" stroke-width="1" stroke-linecap="round"/></svg>2019-02-15 00:00:00</div><div class="dash">-</div><div class="inp d" style="left:537px;top:12px;width:200px"><svg class="clk" viewBox="0 0 12 12"><circle cx="6" cy="6" r="4.9" fill="none" stroke="#c0c4cc" stroke-width="1"/><path d="M6 3.1 V6.2 L8 7.4" fill="none" stroke="#c0c4cc" stroke-width="1" stroke-linecap="round"/></svg>2019-02-21 23:59:59</div><div class="inp p" style="left:760px;top:12px;width:312px"></div><div class="inp p" style="left:1092px;top:12px;width:199px">8</div><div class="sbt"><svg class="sv" viewBox="0 0 11 11"><path d="M0.6 0.6 H8 L10.4 3 V10.4 H0.6 Z M2.3 10.4 V6.3 H8.7 V10.4 M2.6 0.6 V3.4 H7 V0.6" fill="none" stroke="currentColor" stroke-width="1.1"/><rect x="4.9" y="0.9" width="1.3" height="2" fill="currentColor"/></svg><b>保存</b></div><div class="sw" style="left:1637px"><i></i></div><div class="sw" style="left:1911px"><i></i></div></div>
<div class="r s" style="top:961px"><div class="cb" style="top:20px"></div><span class="dot" style="top:19px">.</span><div class="id">54</div><div class="inp p" style="left:110px;top:12px;width:180px">安徽快三</div><div class="inp d" style="left:313px;top:12px;width:200px"><svg class="clk" viewBox="0 0 12 12"><circle cx="6" cy="6" r="4.9" fill="none" stroke="#c0c4cc" stroke-width="1"/><path d="M6 3.1 V6.2 L8 7.4" fill="none" stroke="#c0c4cc" stroke-width="1" stroke-linecap="round"/></svg>2019-02-15 00:00:00</div><div class="dash">-</div><div class="inp d" style="left:537px;top:12px;width:200px"><svg class="clk" viewBox="0 0 12 12"><circle cx="6" cy="6" r="4.9" fill="none" stroke="#c0c4cc" stroke-width="1"/><path d="M6 3.1 V6.2 L8 7.4" fill="none" stroke="#c0c4cc" stroke-width="1" stroke-linecap="round"/></svg>2019-02-21 23:59:59</div><div class="inp p" style="left:760px;top:12px;width:312px"></div><div class="inp p" style="left:1092px;top:12px;width:199px">8</div><div class="sbt"><svg class="sv" viewBox="0 0 11 11"><path d="M0.6 0.6 H8 L10.4 3 V10.4 H0.6 Z M2.3 10.4 V6.3 H8.7 V10.4 M2.6 0.6 V3.4 H7 V0.6" fill="none" stroke="currentColor" stroke-width="1.1"/><rect x="4.9" y="0.9" width="1.3" height="2" fill="currentColor"/></svg><b>保存</b></div><div class="sw" style="left:1637px"><i></i></div><div class="sw off" style="left:1911px"><i></i></div></div>
<div class="r" style="top:1014px"><div class="cb" style="top:20px"></div><span class="dot" style="top:19px">.</span><div class="id">55</div><div class="inp p" style="left:110px;top:12px;width:180px">贵州快三</div><div class="inp d" style="left:313px;top:12px;width:200px"><svg class="clk" viewBox="0 0 12 12"><circle cx="6" cy="6" r="4.9" fill="none" stroke="#c0c4cc" stroke-width="1"/><path d="M6 3.1 V6.2 L8 7.4" fill="none" stroke="#c0c4cc" stroke-width="1" stroke-linecap="round"/></svg>2019-02-15 00:00:00</div><div class="dash">-</div><div class="inp d" style="left:537px;top:12px;width:200px"><svg class="clk" viewBox="0 0 12 12"><circle cx="6" cy="6" r="4.9" fill="none" stroke="#c0c4cc" stroke-width="1"/><path d="M6 3.1 V6.2 L8 7.4" fill="none" stroke="#c0c4cc" stroke-width="1" stroke-linecap="round"/></svg>2019-02-21 23:59:59</div><div class="inp p" style="left:760px;top:12px;width:312px"></div><div class="inp p" style="left:1092px;top:12px;width:199px">8</div><div class="sbt"><svg class="sv" viewBox="0 0 11 11"><path d="M0.6 0.6 H8 L10.4 3 V10.4 H0.6 Z M2.3 10.4 V6.3 H8.7 V10.4 M2.6 0.6 V3.4 H7 V0.6" fill="none" stroke="currentColor" stroke-width="1.1"/><rect x="4.9" y="0.9" width="1.3" height="2" fill="currentColor"/></svg><b>保存</b></div><div class="sw" style="left:1637px"><i></i></div><div class="sw off" style="left:1911px"><i></i></div></div>
</div></div>
<div id="sb"><svg class="up" viewBox="0 0 11 8"><path d="M5.5 1.2 L9.8 7 H1.2 Z" fill="#8c8c8c" stroke="#8c8c8c" stroke-width="1.2" stroke-linejoin="round"/></svg><div class="th2"></div><svg class="dn" viewBox="0 0 11 8"><path d="M5.5 6.8 L9.8 1 H1.2 Z" fill="#8c8c8c" stroke="#8c8c8c" stroke-width="1.2" stroke-linejoin="round"/></svg></div><div style="position:absolute;left:200px;top:62px;width:1px;height:1243px;background:#fff"></div></body></html>
